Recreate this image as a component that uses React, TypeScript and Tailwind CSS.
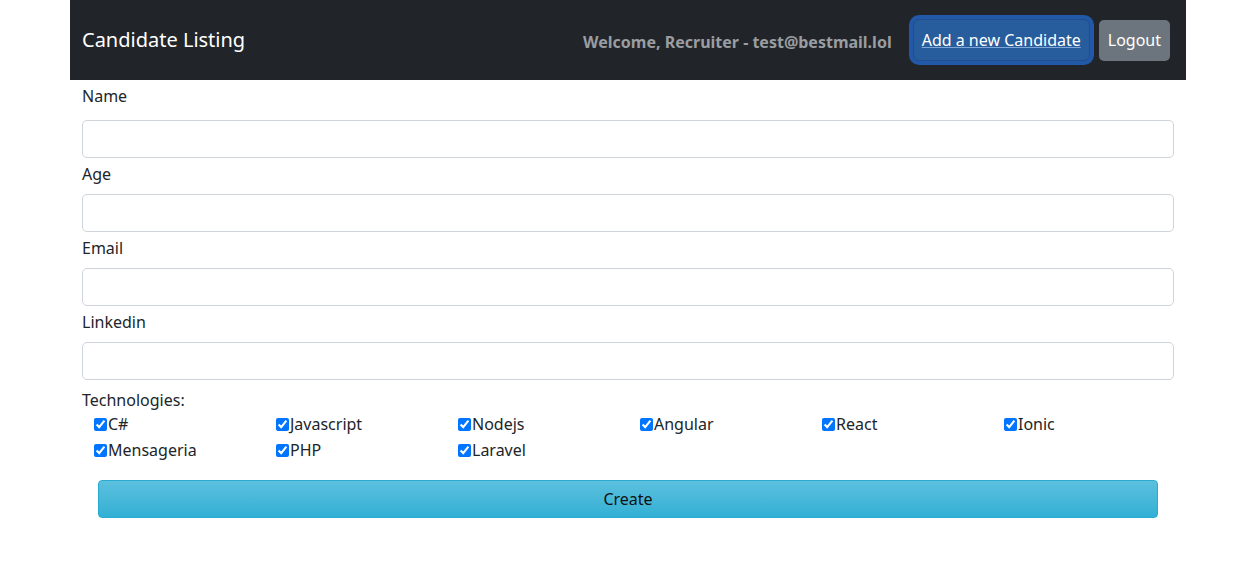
import * as React from "react";

const techs = ["C#", "Javascript", "Nodejs", "Angular", "React", "Ionic", "Mensageria", "PHP", "Laravel"];

function Field({ label, first }: { label: string; first?: boolean }) {
  return (
    <div>
      <label className={"block h-6 leading-6 " + (first ? "mt-1 mb-3" : "mt-1 mb-2")}>{label}</label>
      <input
        type="text"
        className="block h-[38px] w-full rounded-[5px] border border-[#ced4da] bg-white px-3 outline-none"
      />
    </div>
  );
}

export default function App() {
  return (
    <div className="min-h-[584px] bg-white text-[16px] text-[#212529]" style={{ fontFamily: '"Noto Sans", sans-serif' }}>
      <div className="ml-[70px] w-[1116px]">
        <header className="flex h-20 items-center bg-[#212529] pl-3 pr-4">
          <span className="text-[20px] text-white">Candidate Listing</span>
          <div className="ml-auto flex items-center">
            <span className="mr-[21px] mt-1 text-[16px] font-bold text-[#9a9da1]">
              Welcome, Recruiter - test@bestmail.lol
            </span>
            <a className="flex h-[42px] items-center rounded-[6px] border border-[#1f4f8c] bg-[#275d9c] px-2 text-white underline decoration-[#7fa6d6] shadow-[0_0_0_4px_#2258a8]">
              Add a new Candidate
            </a>
            <button className="ml-[9px] flex h-[41px] items-center rounded-[5px] bg-[#6c757d] px-[9px] text-white">
              Logout
            </button>
          </div>
        </header>
        <main className="px-3">
          <Field label="Name" first />
          <Field label="Age" />
          <Field label="Email" />
          <Field label="Linkedin" />
          <div className="mt-2 h-6 leading-6">Technologies:</div>
          <div className="-mr-3 -mt-px grid grid-cols-6 pl-3">
            {techs.map((t) => (
              <label key={t} className="flex h-[26px] items-center">
                <input type="checkbox" checked readOnly className="m-0 mr-px h-[13px] w-[13px]" />
                <span>{t}</span>
              </label>
            ))}
          </div>
          <div className="px-4 pt-[17px]">
            <button className="block h-[38px] w-full rounded-[4px] border border-[#2aabd2] bg-gradient-to-b from-[#5bc0de] to-[#31b0d5] text-[#111]">
              Create
            </button>
          </div>
        </main>
      </div>
    </div>
  );
}
